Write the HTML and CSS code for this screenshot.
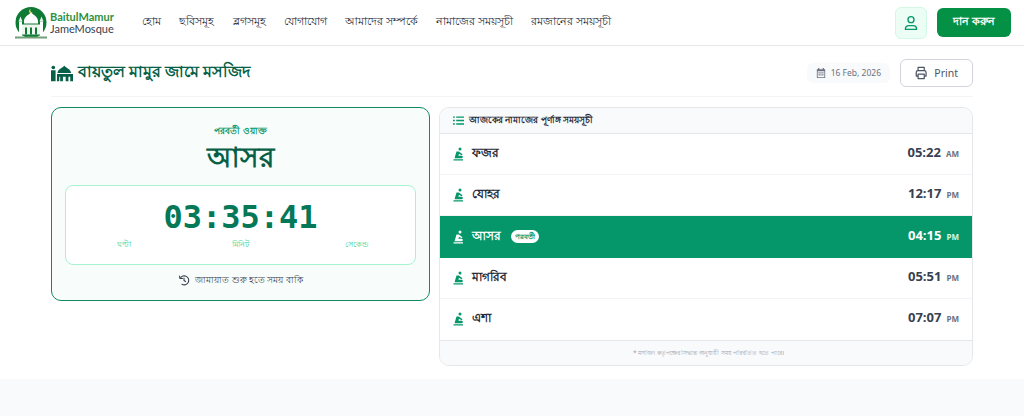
FILE: index.html
```html
<!DOCTYPE html>
<html lang="en">
<head>
    <meta charset="UTF-8">
    <meta name="viewport" content="width=device-width, initial-scale=1.0">
    <title>Baitul Mamur Jame Mosque</title>
    <link rel="stylesheet" href="styles.css">
</head>
<body>
<header class="topbar">
    <a class="logo" href="#">
        <svg class="logo-mark" viewBox="2 1.500 32 32" width="32" height="32">
            <circle cx="18" cy="17" r="15.500" fill="#0f7a35"/>
            <path d="M18 7c3 3 7 4 7 9v2H11v-2c0-5 4-6 7-9z" fill="#fff"/>
            <path d="M6 16h3v14H6zM27 16h3v14h-3z" fill="#fff"/>
            <path d="M7.500 11l2 5h-4zM28.500 11l2 5h-4z" fill="#e6f3ea"/>
            <path d="M9 19h18v10H9z" fill="#eef6f0"/>
            <path d="M12 22h2v7h-2zM17 22h2v7h-2zM22 22h2v7h-2z" fill="#0f7a35"/>
            <path d="M2 31h32v2H2z" fill="#6f9f78"/>
            <path d="M18 3.500a2 2 0 1 0 1.800 2.900 1.600 1.600 0 1 1-1.800-2.900z" fill="#e8d870"/>
        </svg>
        <span class="logo-text"><b>BaitulMamur</b><span>JameMosque</span></span>
    </a>
    <nav class="nav">
        <a href="#">হোম</a>
        <a href="#">ছবিসমূহ</a>
        <a href="#">ব্লগসমূহ</a>
        <a href="#">যোগাযোগ</a>
        <a href="#">আমাদের সম্পর্কে</a>
        <a href="#">নামাজের সময়সূচী</a>
        <a href="#">রমজানের সময়সূচী</a>
    </nav>
    <div class="top-actions">
        <a class="user-btn" href="#">
            <svg viewBox="0 0 24 24" width="18" height="18" fill="none" stroke="#059669" stroke-width="1.800" stroke-linecap="round" stroke-linejoin="round">
                <circle cx="12" cy="7.500" r="4"/>
                <path d="M4.500 20.500c0-3.500 2.500-5 5-5h5c2.500 0 5 1.500 5 5z"/>
            </svg>
        </a>
        <a class="donate-btn" href="#">দান করুন</a>
    </div>
</header>

<main class="page">
    <div class="container">
        <div class="title-row">
            <h1>
                <svg viewBox="0 0 24 18" width="22" height="18">
                    <use href="#mosque"/>
                </svg>
                বায়তুল মামুর জামে মসজিদ
            </h1>
            <div class="title-actions">
                <span class="date-chip">
                    <svg viewBox="0 0 12 12" width="10" height="10" fill="#6b7280">
                        <path d="M2.500 0h1.500v1.500h4V0h1.500v1.500H11V12H1V1.500h1.500zM2 4v7h8V4z"/>
                        <path d="M3 5h1.500v1.500H3zM5.250 5h1.500v1.500h-1.500zM7.500 5H9v1.500H7.500zM3 7.500h1.500V9H3zM5.250 7.500h1.500V9h-1.500zM7.500 7.500H9V9H7.500z"/>
                    </svg>
                    16 Feb, 2026
                </span>
                <button class="print-btn">
                    <svg viewBox="2 2 20 20" width="16" height="16" fill="none" stroke="#4b5563" stroke-width="2" stroke-linejoin="round">
                        <path d="M7 8V3h10v5"/>
                        <path d="M7 17H4v-6a3 3 0 0 1 3-3h10a3 3 0 0 1 3 3v6h-3"/>
                        <path d="M7 14h10v7H7z"/>
                    </svg>
                    Print
                </button>
            </div>
        </div>

        <div class="columns">
            <section class="next-card">
                <p class="next-label">পরবর্তী ওয়াক্ত</p>
                <h2 class="next-name">আসর</h2>
                <div class="clock-box">
                    <div class="clock">03:35:41</div>
                    <div class="clock-units">
                        <span>ঘণ্টা</span>
                        <span>মিনিট</span>
                        <span>সেকেন্ড</span>
                    </div>
                </div>
                <p class="clock-note">
                    <svg viewBox="0 0 24 24" width="12" height="12" fill="none" stroke="#374151" stroke-width="2.200" stroke-linecap="round" stroke-linejoin="round">
                        <path d="M3 4l1 5h5"/>
                        <path d="M4.500 8.500A9 9 0 1 1 8 20.500"/>
                        <path d="M12 8v5l3 2"/>
                    </svg>
                    জামায়াত শুরু হতে সময় বাকি
                </p>
            </section>

            <section class="times-card">
                <div class="times-head">
                    <svg viewBox="0 0 12 12" width="11" height="11" fill="#059669">
                        <path d="M0 1.500h2v1.500H0zM3.500 1.500H12v1.500H3.500zM0 5.250h2v1.500H0zM3.500 5.250H12v1.500H3.500zM0 9h2v1.500H0zM3.500 9H12v1.500H3.500z"/>
                    </svg>
                    আজকের নামাজের পূর্ণাঙ্গ সময়সূচী
                </div>
                <div class="time-row">
                    <span class="time-name"><svg class="pray" viewBox="0 0 12 14"><use href="#pray"/></svg>ফজর</span>
                    <span class="time-val">05:22<small>AM</small></span>
                </div>
                <div class="time-row">
                    <span class="time-name"><svg class="pray" viewBox="0 0 12 14"><use href="#pray"/></svg>যোহর</span>
                    <span class="time-val">12:17<small>PM</small></span>
                </div>
                <div class="time-row active">
                    <span class="time-name"><svg class="pray" viewBox="0 0 12 14"><use href="#pray"/></svg>আসর<em class="badge">পরবর্তী</em></span>
                    <span class="time-val">04:15<small>PM</small></span>
                </div>
                <div class="time-row">
                    <span class="time-name"><svg class="pray" viewBox="0 0 12 14"><use href="#pray"/></svg>মাগরিব</span>
                    <span class="time-val">05:51<small>PM</small></span>
                </div>
                <div class="time-row last">
                    <span class="time-name"><svg class="pray" viewBox="0 0 12 14"><use href="#pray"/></svg>এশা</span>
                    <span class="time-val">07:07<small>PM</small></span>
                </div>
                <div class="times-foot">* মসজিদ কর্তৃপক্ষের সিদ্ধান্ত অনুযায়ী সময় পরিবর্তিত হতে পারে।</div>
            </section>
        </div>
    </div>
</main>
<div class="footer-band"></div>

<svg class="defs" width="0" height="0">
    <defs>
        <g id="mosque" fill="#065f46">
            <circle cx="2.500" cy="3" r="2"/>
            <path d="M0 6h5v12H0z"/>
            <path d="M14.500 1c2 2.500 7 3.500 7.500 8H7c.5-4.500 5.500-5.500 7.500-8z"/>
            <path d="M6.500 10H24v8h-3v-5h-2v5h-3v-5h-3v5h-3v-5H9v5H6.500z"/>
        </g>
        <g id="pray" fill="currentColor">
            <circle cx="8" cy="1.900" r="1.500"/>
            <path d="M4.500 4.500H6.800L10.500 7.200 9.700 8.300 7 6.800 6.400 8.800H9.500Q10.800 8.800 10.800 10T9.500 11.300H3Q2.500 11.300 2.800 10.300z"/>
            <path d="M1.500 12.300H11v1.100H1.500z"/>
        </g>
    </defs>
</svg>
</body>
</html>
```
FILE: styles.css
```css
* {
    box-sizing: border-box;
}
body {
    font-family: "Noto Sans", sans-serif;
    background-color: #f9fafb;
    color: #1f2937;
    margin: 0;
    padding: 0;
}
a {
    text-decoration: none;
    color: inherit;
}
.defs {
    position: absolute;
}

.topbar {
    display: flex;
    align-items: center;
    height: 46px;
    padding: 0 13px 0 15px;
    background: #fff;
    border-bottom: 1px solid #e5e7eb;
}
.logo {
    display: flex;
    align-items: center;
    gap: 3px;
    width: 127px;
}
.logo-text {
    display: flex;
    flex-direction: column;
    font-family: Lato, sans-serif;
    font-size: 11px;
    line-height: 12px;
    color: #374151;
}
.logo-text b {
    color: #2f8f3f;
}
.nav {
    display: flex;
    gap: 18.300px;
    font-size: 10.800px;
    font-weight: 500;
    color: #1f2937;
}
.top-actions {
    display: flex;
    align-items: center;
    gap: 10px;
    margin-left: auto;
}
.user-btn {
    display: flex;
    align-items: center;
    justify-content: center;
    width: 32px;
    height: 32px;
    background: #ecfdf5;
    border: 1px solid #d1fae5;
    border-radius: 6px;
}
.donate-btn {
    display: flex;
    align-items: center;
    justify-content: center;
    width: 74px;
    height: 29px;
    background: #059145;
    border-radius: 6px;
    color: #fff;
    font-size: 11px;
    font-weight: 700;
}

.page {
    background: #fff;
    height: 333px;
}
.container {
    width: 922px;
    margin-left: 51px;
}
.title-row {
    display: flex;
    align-items: center;
    justify-content: space-between;
    height: 51px;
    padding-top: 3px;
    border-bottom: 1px solid #f3f4f6;
}
.title-row h1 {
    display: flex;
    align-items: center;
    gap: 5px;
    margin: 0;
    font-size: 15.800px;
    font-weight: 700;
    color: #065f46;
}
.title-actions {
    display: flex;
    align-items: center;
    gap: 10px;
}
.date-chip {
    display: flex;
    align-items: center;
    gap: 5px;
    height: 20px;
    padding: 0 9px;
    background: #f9fafb;
    border-radius: 6px;
    font-size: 8.500px;
    color: #6b7280;
}
.print-btn {
    display: flex;
    align-items: center;
    gap: 7px;
    width: 73px;
    height: 28px;
    padding: 0 14px;
    background: #fff;
    border: 1px solid #d1d5db;
    border-radius: 6px;
    font-family: inherit;
    font-size: 10.500px;
    color: #4b5563;
}

.columns {
    display: grid;
    grid-template-columns: 379px 534px;
    gap: 9px;
    align-items: start;
    margin-top: 10px;
}
.next-card {
    height: 194px;
    padding: 16px 13px 0;
    background: #f8fdfb;
    border: 1px solid #0f8a63;
    border-radius: 10px;
    text-align: center;
}
.next-label {
    margin: 0;
    font-size: 8.500px;
    line-height: 14px;
    font-weight: 700;
    color: #059669;
}
.next-name {
    margin: 0 0 12px;
    padding-top: 1px;
    font-size: 28px;
    line-height: 34px;
    font-weight: 700;
    color: #065f46;
}
.clock-box {
    height: 80px;
    padding-top: 9px;
    background: #fff;
    border: 1px solid #a7f3d0;
    border-radius: 8px;
}
.clock {
    font-family: "DejaVu Sans Mono", monospace;
    font-size: 32px;
    line-height: 44px;
    font-weight: 700;
    color: #047857;
}
.clock-units {
    display: grid;
    grid-template-columns: repeat(3, 1fr);
    font-size: 8px;
    line-height: 10px;
    font-weight: 500;
    color: #34d399;
}
.clock-note {
    display: flex;
    align-items: center;
    justify-content: center;
    gap: 5px;
    margin: 7px 0 0;
    font-size: 8.800px;
    line-height: 16px;
    font-weight: 500;
    color: #374151;
}

.times-card {
    height: 259px;
    background: #fff;
    border: 1px solid #e5e7eb;
    border-radius: 10px;
    overflow: hidden;
}
.times-head {
    display: flex;
    align-items: center;
    gap: 5px;
    height: 26px;
    padding: 0 13px;
    background: #f9fafb;
    border-bottom: 1px solid #e5e7eb;
    font-size: 9.300px;
    font-weight: 600;
    color: #1f2937;
}
.time-row {
    display: flex;
    align-items: center;
    justify-content: space-between;
    height: 41.200px;
    padding: 0 13px 0 12px;
    border-bottom: 1px solid #f3f4f6;
}
.time-row.last {
    border-bottom: none;
}
.time-name {
    display: flex;
    align-items: center;
    font-size: 12.200px;
    font-weight: 600;
    color: #1f2937;
}
.pray {
    width: 12px;
    height: 14px;
    margin-right: 8px;
    color: #059669;
}
.time-val {
    margin-bottom: 3px;
    font-family: "Open Sans", sans-serif;
    font-size: 13px;
    line-height: 1;
    font-weight: 700;
    color: #374151;
}
.time-val small {
    margin-left: 5px;
    font-size: 8px;
    color: #6b7280;
}
.time-row.active {
    background: #059669;
    border-bottom: none;
}
.time-row.active .time-name,
.time-row.active .time-val,
.time-row.active .pray {
    color: #fff;
}
.time-row.active small {
    color: #d1fae5;
}
.badge {
    margin-left: 10px;
    padding: 0 4px;
    background: #fff;
    border-radius: 8px;
    font-size: 7px;
    line-height: 13px;
    font-style: normal;
    color: #059669;
}
.times-foot {
    height: 26px;
    line-height: 23px;
    padding-left: 5px;
    background: #f9fafb;
    border-top: 1px solid #e5e7eb;
    font-size: 6.400px;
    text-align: center;
    color: #9ca3af;
}

.footer-band {
    height: 37px;
}
```
